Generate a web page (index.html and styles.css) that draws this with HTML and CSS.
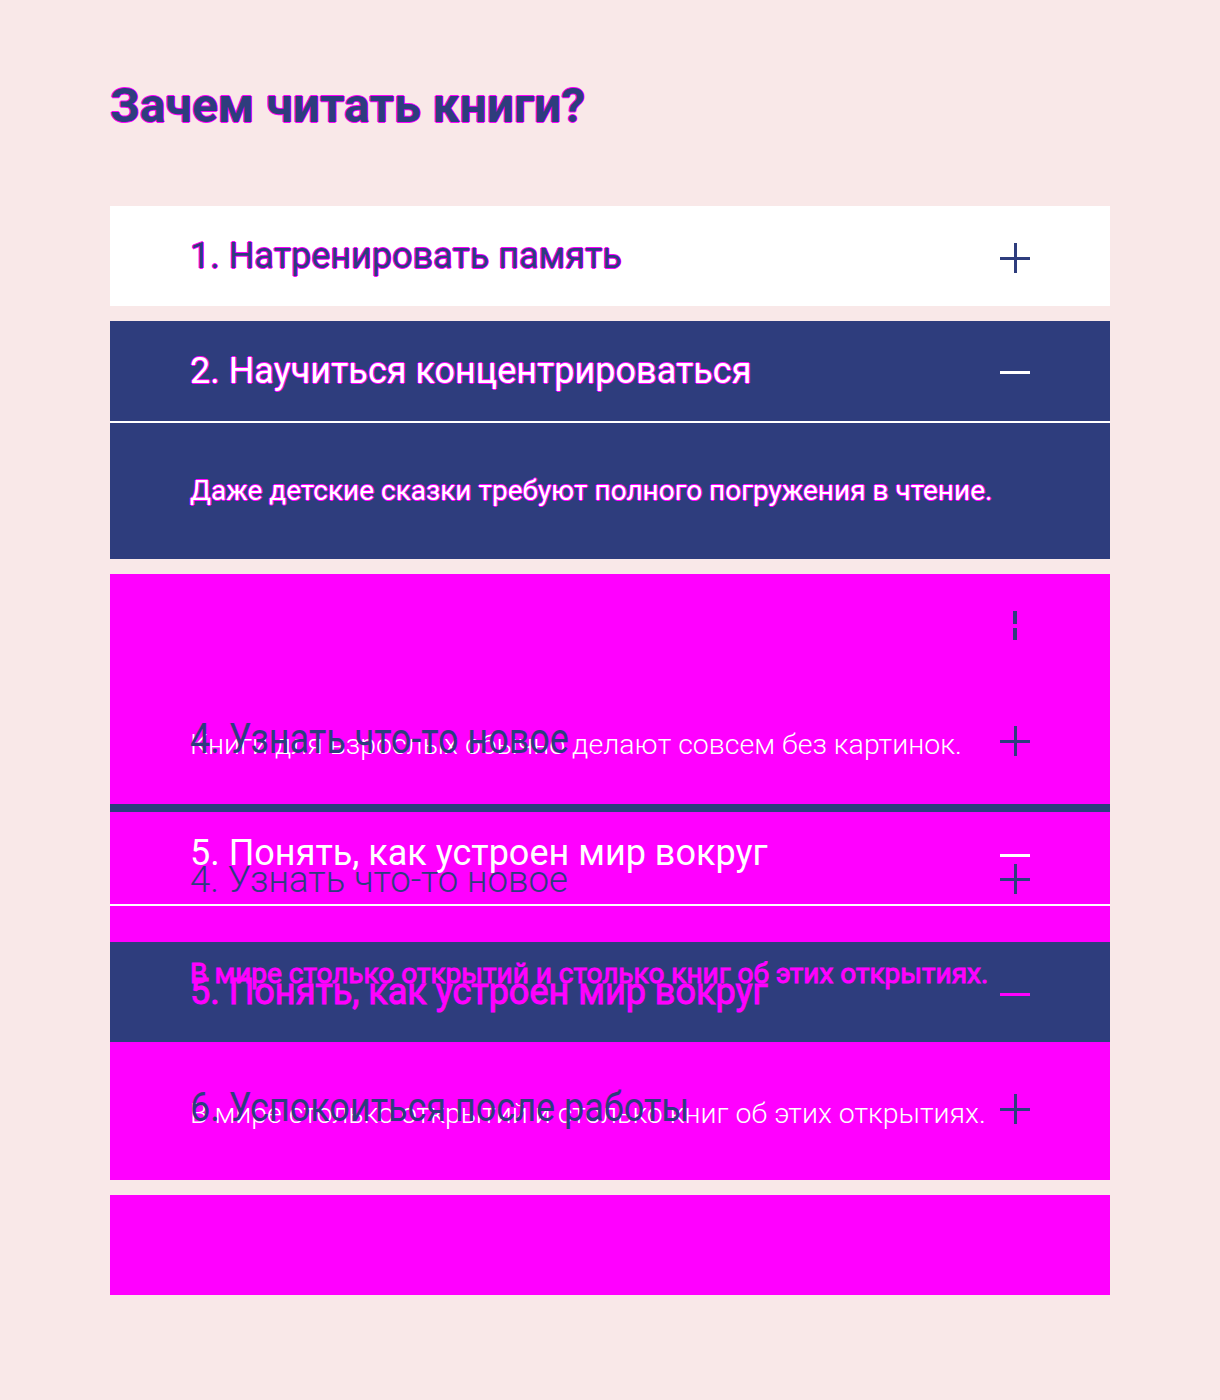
FILE: index.html
```html
<!DOCTYPE html>
<html lang="ru">
<head>
<meta charset="utf-8">
<title>Зачем читать книги?</title>
<link rel="stylesheet" href="styles.css">
</head>
<body>
<main class="page">
  <h1 class="title halo">Зачем читать книги?</h1>
  <div class="acc">
    <div class="row row--light">
      <span class="head head--blue halo">1. Натренировать память</span>
      <svg class="icon icon--plus" width="30" height="30" viewBox="0 0 30 30"><rect x="0" y="14" width="30" height="3" fill="#2e3d7d"/><rect x="14" y="0" width="3" height="30" fill="#2e3d7d"/></svg>
    </div>

    <div class="open">
      <div class="row row--dark">
        <span class="head head--white halo">2. Научиться концентрироваться</span>
        <svg class="icon icon--minus" width="30" height="3" viewBox="0 0 30 3"><rect x="0" y="0" width="30" height="3" fill="#fff"/></svg>
      </div>
      <div class="sep"></div>
      <div class="body-row">
        <p class="text text--white halo">Даже детские сказки требуют полного погружения в чтение.</p>
      </div>
    </div>

    <div class="glitch">
      <div class="stack stack--a">
        <div class="i a-dash"><span class="dash dash--top"></span><span class="dash dash--bottom"></span></div>
        <span class="t head head--blue stretch a-head">4. Узнать что-то новое</span>
        <span class="t thin text--white a-text">Книги для взрослых обычно делают совсем без картинок.</span>
        <svg class="i svg-i a-plus" width="30" height="30" viewBox="0 0 30 30"><rect x="0" y="14" width="30" height="3" fill="#2e3d7d"/><rect x="14" y="0" width="3" height="30" fill="#2e3d7d"/></svg>
      </div>
      <div class="strip"></div>
      <div class="stack stack--b">
        <span class="t head head--white b-head">5. Понять, как устроен мир вокруг</span>
        <span class="t head head--blue light-head b-head2">4. Узнать что-то новое</span>
        <svg class="i svg-i b-minus" width="30" height="3" viewBox="0 0 30 3"><rect x="0" y="0" width="30" height="3" fill="#fff"/></svg>
        <svg class="i svg-i b-plus" width="30" height="30" viewBox="0 0 30 30"><rect x="0" y="14" width="30" height="3" fill="#2e3d7d"/><rect x="14" y="0" width="3" height="30" fill="#2e3d7d"/></svg>
      </div>
      <div class="sep"></div>
      <div class="pad"></div>
      <div class="stack stack--dark">
        <span class="t text stroke d-text">В мире столько открытий и столько книг об этих открытиях.</span>
        <span class="t head stroke d-head">5. Понять, как устроен мир вокруг</span>
        <svg class="i svg-i d-minus" width="30" height="3" viewBox="0 0 30 3"><rect x="0" y="0" width="30" height="3" fill="#ff00ff"/></svg>
      </div>
      <div class="stack stack--c">
        <span class="t head head--blue stretch-c c-head">6. Успокоиться после работы</span>
        <span class="t thin text--white c-text">В мире столько открытий и столько книг об этих открытиях.</span>
        <svg class="i svg-i c-plus" width="30" height="30" viewBox="0 0 30 30"><rect x="0" y="14" width="30" height="3" fill="#2e3d7d"/><rect x="14" y="0" width="3" height="30" fill="#2e3d7d"/></svg>
      </div>
    </div>

    <div class="row row--magenta"></div>
  </div>
</main>
</body>
</html>
```

FILE: styles.css
```css
body {
  margin: 0;
  background: #f9e8e8;
  font-family: Roboto, "Noto Sans", sans-serif;
}

.page {
  width: 1000px;
  padding: 82px 110px 0;
}

.halo {
  text-shadow: 1px 0 #ff00ff, -1px 0 #ff00ff, 0 1px #ff00ff, 0 -1px #ff00ff;
}

.title {
  margin: 0;
  font-size: 48px;
  line-height: 48px;
  font-weight: 700;
  color: #2e3d7d;
  white-space: nowrap;
}

.acc {
  margin-top: 76px;
  display: flex;
  flex-direction: column;
  gap: 15px;
}

.row {
  height: 100px;
  display: flex;
  align-items: center;
  justify-content: space-between;
  padding: 0 80px;
}

.row--light { background: #fff; }
.row--dark { background: #2e3d7d; }
.row--magenta { background: #ff00ff; }

.head {
  font-size: 36px;
  line-height: 36px;
  font-weight: 400;
  white-space: nowrap;
}

.head--blue { color: #2e3d7d; }
.head--white { color: #fff; }

.light-head {
  font-size: 36.5px;
  font-weight: 300;
}

.text {
  margin: 0;
  font-size: 28px;
  line-height: 28px;
  white-space: nowrap;
}

.thin {
  font-size: 28.5px;
  line-height: 28px;
  font-weight: 300;
  white-space: nowrap;
}

.text--white { color: #fff; }

.icon--plus { margin-top: 4px; flex: none; }
.icon--minus { margin-top: 3px; flex: none; }

.sep {
  height: 2px;
  background: #fff;
}

.body-row {
  height: 136px;
  background: #2e3d7d;
  display: flex;
  align-items: center;
  padding: 0 80px;
}

.glitch {
  display: flex;
  flex-direction: column;
}

.stack {
  display: grid;
  grid-template-columns: 1fr 30px;
  padding: 0 80px;
  background: #ff00ff;
}

.stack > * {
  grid-row: 1;
  align-self: start;
}

.stack > .t { grid-column: 1; }
.stack > .i { grid-column: 2; }
.svg-i { display: block; }

.stack--a { height: 230px; }
.stack--b { height: 92px; }
.stack--dark { height: 100px; background: #2e3d7d; }
.stack--c { height: 138px; }

.strip { height: 8px; background: #2e3d7d; }
.pad { height: 36px; background: #ff00ff; }

.a-dash {
  margin-top: 37px;
  display: flex;
  flex-direction: column;
  align-items: center;
  gap: 4px;
}

.dash {
  display: block;
  width: 4px;
  background: #2e3d7d;
}

.dash--top { height: 13px; }
.dash--bottom { height: 12px; }

.stretch {
  transform: scaleY(1.2);
  transform-origin: 0 0;
}

.stretch-c {
  transform: scaleY(1.12);
  transform-origin: 0 0;
}

.a-head { margin-top: 143px; }
.a-text { margin-top: 157px; }
.a-plus { margin-top: 152px; }

.b-head { margin-top: 23px; }
.b-head2 { margin-top: 50px; }
.b-minus { margin-top: 42px; }
.b-plus { margin-top: 52px; }

.stroke {
  color: #ff00ff;
  -webkit-text-stroke: 1px #ff00ff;
}

.d-text { margin-top: 18px; }
.d-head { margin-top: 32px; }
.d-minus { margin-top: 51px; }

.c-head { margin-top: 45px; }
.c-text { margin-top: 58px; }
.c-plus { margin-top: 52px; }
```
